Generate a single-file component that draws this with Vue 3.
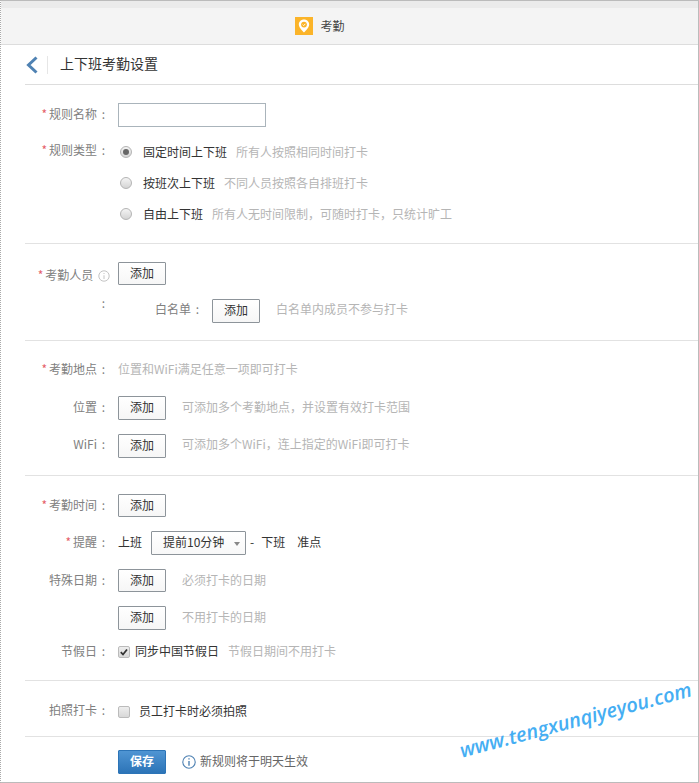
<script setup>
const radios = [
  { text: '固定时间上下班', hint: '所有人按照相同时间打卡', on: true },
  { text: '按班次上下班', hint: '不同人员按照各自排班打卡', on: false },
  { text: '自由上下班', hint: '所有人无时间限制，可随时打卡，只统计旷工', on: false },
]
</script>

<template>
  <div class="page">
    <div class="band"></div>
    <header class="head">
      <span class="logo">
        <svg width="18" height="18" viewBox="0 0 18 18">
          <rect width="18" height="18" fill="#fbb429" />
          <path d="M9 2.600c-3 0-5.200 2.200-5.200 5 0 3.400 5.200 8 5.200 8s5.200-4.600 5.200-8c0-2.800-2.200-5-5.200-5z" fill="#fff" />
          <circle cx="9" cy="7.600" r="2.900" fill="#fbb429" />
          <path d="M7.700 7.600l1 1 1.700-1.800" fill="none" stroke="#fff" stroke-width="1" />
        </svg>
      </span>
      <span class="head-title">考勤</span>
    </header>

    <div class="main">
      <div class="titlebar">
        <svg class="back" width="12" height="18" viewBox="0 0 12 18">
          <path d="M10.500 1.500L2.500 9l8 7.500" fill="none" stroke="#4f82b3" stroke-width="3" />
        </svg>
        <span class="vline"></span>
        <span class="title">上下班考勤设置</span>
      </div>

      <section class="sec s1">
        <div class="row">
          <label class="label"><i>*</i>规则名称<b>:</b></label>
          <input class="input" type="text" />
        </div>
        <div class="radio-group">
          <label class="label up"><i>*</i>规则类型<b>:</b></label>
          <div class="radios">
            <div v-for="r in radios" :key="r.text" class="radio-row">
              <span class="radio" :class="{ on: r.on }"></span>
              <span class="dark">{{ r.text }}</span>
              <span class="hint near">{{ r.hint }}</span>
            </div>
          </div>
        </div>
      </section>

      <section class="sec s2">
        <div class="people-label label">
          <span class="pl-line"><i>*</i>考勤人员
            <svg class="tip" width="12" height="12" viewBox="0 0 12 12">
              <circle cx="6" cy="6" r="5.200" fill="none" stroke="#c4c4c4" />
              <path d="M6 3v1M6 5.300V9" stroke="#c4c4c4" />
            </svg>
          </span>
          <span class="pl-colon">:</span>
        </div>
        <div class="people">
          <button class="btn short">添加</button>
          <div class="white-row row raised">
            <span class="sub-label">白名单<b>:</b></span>
            <button class="btn">添加</button>
            <span class="hint wide">白名单内成员不参与打卡</span>
          </div>
        </div>
      </section>

      <section class="sec s3">
        <div class="row h20 flat">
          <label class="label"><i>*</i>考勤地点<b>:</b></label>
          <span class="hint">位置和WiFi满足任意一项即可打卡</span>
        </div>
        <div class="row m17">
          <label class="label">位置<b>:</b></label>
          <button class="btn">添加</button>
          <span class="hint wide">可添加多个考勤地点，并设置有效打卡范围</span>
        </div>
        <div class="row m14 raised">
          <label class="label">WiFi<b>:</b></label>
          <button class="btn">添加</button>
          <span class="hint wide">可添加多个WiFi，连上指定的WiFi即可打卡</span>
        </div>
      </section>

      <section class="sec s4">
        <div class="row">
          <label class="label"><i>*</i>考勤时间<b>:</b></label>
          <button class="btn short">添加</button>
        </div>
        <div class="row m14">
          <label class="label"><i>*</i>提醒<b>:</b></label>
          <span class="dark">上班</span>
          <span class="select">提前10分钟<em></em></span>
          <span class="dark dash">-</span>
          <span class="dark">下班</span>
          <span class="dark on-time">准点</span>
        </div>
        <div class="row m14">
          <label class="label">特殊日期<b>:</b></label>
          <button class="btn short">添加</button>
          <span class="hint wide">必须打卡的日期</span>
        </div>
        <div class="row m14">
          <label class="label"></label>
          <button class="btn">添加</button>
          <span class="hint wide">不用打卡的日期</span>
        </div>
        <div class="row h20 m12">
          <label class="label">节假日<b>:</b></label>
          <span class="check on">
            <svg width="12" height="12" viewBox="0 0 12 12">
              <path d="M2.800 6.200l2.200 2.300 4-5" fill="none" stroke="#333" stroke-width="1.800" />
            </svg>
          </span>
          <span class="dark gap6">同步中国节假日</span>
          <span class="hint near">节假日期间不用打卡</span>
        </div>
      </section>

      <section class="sec s5">
        <div class="row h20">
          <label class="label photo">拍照打卡<b>:</b></label>
          <span class="check"></span>
          <span class="dark gap9">员工打卡时必须拍照</span>
        </div>
      </section>

      <section class="s6">
        <div class="row">
          <label class="label"></label>
          <button class="btn save">保存</button>
          <svg class="info" width="14" height="14" viewBox="0 0 14 14">
            <circle cx="7" cy="7" r="6.200" fill="none" stroke="#4f82b3" stroke-width="1.100" />
            <path d="M7 3.200v1.400M7 6v4.800" stroke="#4f82b3" stroke-width="1.400" />
          </svg>
          <span class="notice">新规则将于明天生效</span>
        </div>
      </section>
    </div>

    <div class="watermark">www.tengxunqiyeyou.com</div>
  </div>
</template>

<style>
html, body { margin: 0; background: #fff; }
</style>

<style scoped>
.page {
  position: relative;
  box-sizing: border-box;
  width: 699px;
  height: 783px;
  overflow: hidden;
  background: #fff;
  border: 1px solid #bbb;
  border-left: 1px dotted #aaa;
  font: 12px/20px "Noto Sans CJK SC", "Noto Sans", sans-serif;
  color: #808080;
}
.band { height: 7px; background: #ebebeb; }
.head {
  box-sizing: border-box;
  height: 37px;
  background: #f4f4f4;
  border-bottom: 1px solid #ddd;
  display: flex;
  align-items: center;
  justify-content: center;
  padding-right: 59px;
}
.logo { display: flex; margin-right: 7px; }
.head-title { font-size: 12px; color: #444; }
.main { margin-left: 24px; }
.titlebar {
  box-sizing: border-box;
  height: 40px;
  border-bottom: 1px solid #ddd;
  display: flex;
  align-items: center;
}
.back { margin-left: 1px; }
.vline { width: 1px; height: 18px; background: #e6e6e6; margin: 0 12px 0 9px; }
.title { font-size: 14px; color: #333; padding-bottom: 3px; }
.sec { border-bottom: 1px solid #e2e2e2; }
.s1 { padding: 18px 0 19px; }
.s2 { padding: 18px 0 17px; display: flex; }
.s3 { padding: 18px 0 17px; }
.s4 { padding: 18px 0 18px; }
.s5 { padding: 21px 0 14px; }
.s6 { padding-top: 13px; }
.row { display: flex; align-items: center; }
.row > .label, .row > .hint, .row > .dark, .row > .notice, .row > .sub-label { padding-bottom: 2px; }
.row.raised > .label, .row.raised > .hint, .row.raised > .sub-label { padding-bottom: 4px; }
.row.flat > .label, .row.flat > .hint { padding-bottom: 0; }
.row > .label.photo { padding-bottom: 4px; }
.h20 { height: 20px; }
.m12 { margin-top: 12px; }
.m14 { margin-top: 14px; }
.m17 { margin-top: 17px; }
.label {
  display: block;
  flex: none;
  box-sizing: border-box;
  width: 82px;
  margin-right: 11px;
  text-align: right;
  color: #808080;
}
.label i { font-style: normal; color: #e5606a; margin-right: 2px; }
.label b, .sub-label b {
  display: inline-block;
  box-sizing: border-box;
  width: 10px;
  padding-right: 2px;
  font-weight: 400;
  text-align: right;
}
.input {
  box-sizing: border-box;
  width: 148px;
  height: 24px;
  padding: 0;
  background: #fff;
  border: 1px solid #aab4bb;
  border-radius: 0;
}
.radio-group { display: flex; margin-top: 15px; }
.up { margin-top: -2px; }
.radios { display: flex; flex-direction: column; gap: 11px; }
.radio-row { display: flex; align-items: center; height: 20px; }
.radio {
  box-sizing: border-box;
  position: relative;
  width: 12px;
  height: 12px;
  margin: 0 11px 0 2px;
  border: 1px solid #b4b4b4;
  border-radius: 50%;
  background: linear-gradient(#f4f4f4, #d4d4d4);
}
.radio.on::after {
  content: "";
  position: absolute;
  left: 2px;
  top: 2px;
  width: 6px;
  height: 6px;
  border-radius: 50%;
  background: #666;
}
.dark { color: #333; }
.hint { color: #b5b5b5; }
.near { margin-left: 9px; }
.wide { margin-left: 16px; }
.btn {
  box-sizing: border-box;
  flex: none;
  width: 48px;
  height: 24px;
  padding: 0 0 3px;
  font: 12px/20px "Noto Sans CJK SC", "Noto Sans", sans-serif;
  color: #333;
  background: linear-gradient(#fff, #f6f6f6);
  border: 1px solid #8d949a;
  border-radius: 1px;
}
.short { height: 23px; }
.people-label { margin-top: -1px; line-height: 28px; }
.pl-line { display: block; white-space: nowrap; margin-right: -3px; }
.pl-line i { margin-right: 2px; }
.tip { vertical-align: -2px; margin-left: 2px; }
.pl-colon { display: block; padding-right: 2px; }
.people { display: flex; flex-direction: column; }
.white-row { margin-top: 14px; margin-left: 37px; }
.sub-label { width: 47px; margin-right: 10px; color: #808080; white-space: nowrap; }
.select {
  box-sizing: border-box;
  position: relative;
  width: 95px;
  height: 24px;
  margin-left: 9px;
  padding-left: 11px;
  line-height: 20px;
  color: #333;
  background: linear-gradient(#fff, #f8f8f8);
  border: 1px solid #8d949a;
  border-radius: 1px;
}
.select em {
  position: absolute;
  right: 5px;
  top: 10px;
  border: 3px solid transparent;
  border-top: 4px solid #888;
  border-bottom: 0;
}
.dash { margin: 0 7px 0 4px; }
.on-time { margin-left: 12px; }
.check {
  box-sizing: border-box;
  display: block;
  flex: none;
  width: 12px;
  height: 12px;
  border: 1px solid #bbb;
  border-radius: 2px;
  background: linear-gradient(#eee, #d8d8d8);
}
.check svg { display: block; margin: -1px; }
.gap6 { margin-left: 5px; }
.gap9 { margin-left: 9px; }
.save {
  color: #fff;
  font-weight: 700;
  background: linear-gradient(#4f95d3, #2c74b7);
  border: 1px solid #2c74b7;
}
.info { margin-left: 16px; }
.notice { margin-left: 4px; color: #666; }
.watermark {
  position: absolute;
  left: 455px;
  top: 706px;
  font: italic 600 20px/26px "Open Sans", sans-serif;
  color: #45aef3;
  white-space: nowrap;
  transform: rotate(-15deg);
  transform-origin: center;
}
</style>
